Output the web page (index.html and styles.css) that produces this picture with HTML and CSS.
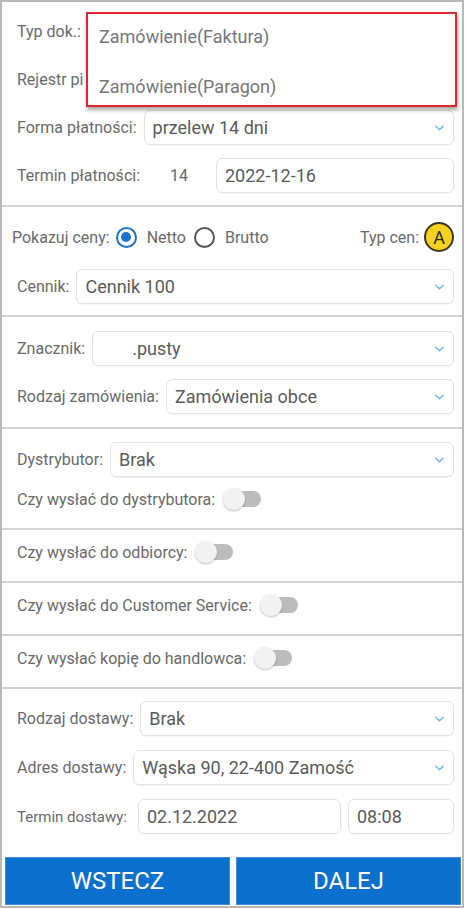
FILE: index.html
```html
<!DOCTYPE html>
<html lang="pl">
<head>
<meta charset="utf-8">
<title>Zamówienie</title>
<link rel="stylesheet" href="styles.css">
</head>
<body>
<div class="screen">
  <section class="sec sec-first">
    <div class="row">
      <span class="lbl">Typ dok.:</span>
      <div class="select"><span class="val"></span><svg class="chev" viewBox="0 0 10 6"><path d="M1 1 L5 5 L9 1"/></svg></div>
    </div>
    <div class="row">
      <span class="lbl lbl-clip">Rejestr pi</span>
      <div class="select"><span class="val"></span><svg class="chev" viewBox="0 0 10 6"><path d="M1 1 L5 5 L9 1"/></svg></div>
    </div>
    <div class="row">
      <span class="lbl">Forma płatności:</span>
      <div class="select"><span class="val">przelew 14 dni</span><svg class="chev" viewBox="0 0 10 6"><path d="M1 1 L5 5 L9 1"/></svg></div>
    </div>
    <div class="row">
      <span class="lbl">Termin płatności:</span>
      <span class="days">14</span>
      <div class="input"><span class="val">2022-12-16</span></div>
    </div>

    <div class="popup">
      <div class="popup-item">Zamówienie(Faktura)</div>
      <div class="popup-item">Zamówienie(Paragon)</div>
    </div>
  </section>

  <section class="sec sec-prices">
    <div class="row row-radio">
      <span class="lbl lbl-tight">Pokazuj ceny:</span>
      <span class="radio on"></span><span class="rlbl">Netto</span>
      <span class="radio"></span><span class="rlbl">Brutto</span>
      <span class="lbl typcen">Typ cen:</span>
      <span class="badge">A</span>
    </div>
    <div class="row">
      <span class="lbl">Cennik:</span>
      <div class="select"><span class="val">Cennik 100</span><svg class="chev" viewBox="0 0 10 6"><path d="M1 1 L5 5 L9 1"/></svg></div>
    </div>
  </section>

  <section class="sec sec-tags">
    <div class="row">
      <span class="lbl">Znacznik:</span>
      <div class="select"><span class="val val-indent">.pusty</span><svg class="chev" viewBox="0 0 10 6"><path d="M1 1 L5 5 L9 1"/></svg></div>
    </div>
    <div class="row">
      <span class="lbl">Rodzaj zamówienia:</span>
      <div class="select"><span class="val">Zamówienia obce</span><svg class="chev" viewBox="0 0 10 6"><path d="M1 1 L5 5 L9 1"/></svg></div>
    </div>
  </section>

  <section class="sec sec-dist">
    <div class="row">
      <span class="lbl">Dystrybutor:</span>
      <div class="select"><span class="val">Brak</span><svg class="chev" viewBox="0 0 10 6"><path d="M1 1 L5 5 L9 1"/></svg></div>
    </div>
    <div class="row row-toggle">
      <span class="lbl">Czy wysłać do dystrybutora:</span>
      <span class="toggle"><span class="knob"></span></span>
    </div>
  </section>

  <section class="sec sec-single">
    <div class="row row-toggle">
      <span class="lbl">Czy wysłać do odbiorcy:</span>
      <span class="toggle"><span class="knob"></span></span>
    </div>
  </section>

  <section class="sec sec-single">
    <div class="row row-toggle">
      <span class="lbl">Czy wysłać do Customer Service:</span>
      <span class="toggle"><span class="knob"></span></span>
    </div>
  </section>

  <section class="sec sec-single">
    <div class="row row-toggle">
      <span class="lbl">Czy wysłać kopię do handlowca:</span>
      <span class="toggle"><span class="knob"></span></span>
    </div>
  </section>

  <section class="sec sec-delivery">
    <div class="row">
      <span class="lbl">Rodzaj dostawy:</span>
      <div class="select"><span class="val">Brak</span><svg class="chev" viewBox="0 0 10 6"><path d="M1 1 L5 5 L9 1"/></svg></div>
    </div>
    <div class="row">
      <span class="lbl">Adres dostawy:</span>
      <div class="select"><span class="val">Wąska 90, 22-400 Zamość</span><svg class="chev" viewBox="0 0 10 6"><path d="M1 1 L5 5 L9 1"/></svg></div>
    </div>
    <div class="row">
      <span class="lbl lbl-small">Termin dostawy:</span>
      <div class="input input-date"><span class="val">02.12.2022</span></div>
      <div class="input input-time"><span class="val">08:08</span></div>
    </div>
  </section>

  <div class="buttons">
    <button class="btn">WSTECZ</button>
    <button class="btn">DALEJ</button>
  </div>
</div>
</body>
</html>
```

FILE: styles.css
```css
* { box-sizing: border-box; }

html, body {
  margin: 0;
  padding: 0;
  background: #ffffff;
}

body {
  font-family: Roboto, "Noto Sans", "Liberation Sans", sans-serif;
}

.screen {
  width: 464px;
  height: 908px;
  border: 2px solid #b9b9b9;
  background: #ffffff;
  position: relative;
  display: flex;
  flex-direction: column;
}

.sec {
  border-top: 2px solid #d3d3d3;
  padding: 13px 8px 12px 15px;
  display: flex;
  flex-direction: column;
  gap: 13px;
}

.sec-first {
  border-top: none;
  padding-top: 12px;
  position: relative;
}

.row {
  display: flex;
  align-items: center;
  height: 35px;
  gap: 7px;
}

.lbl {
  font-size: 16px;
  color: #6a6a6a;
  white-space: nowrap;
  flex: none;
}

.lbl-clip { width: 70px; overflow: hidden; }

.lbl-small { font-size: 15px; margin-right: 4px; }

.select, .input {
  flex: 1;
  height: 35px;
  border: 1px solid #e2e2e2;
  border-radius: 6px;
  display: flex;
  align-items: center;
  padding: 0 9px 0 8px;
  min-width: 0;
  box-shadow: 0 1px 1px rgba(0, 0, 0, 0.04);
}

.val {
  flex: 1;
  font-size: 18px;
  color: #5b5b5b;
  white-space: nowrap;
  overflow: hidden;
}

.val-indent { padding-left: 31px; }

.chev {
  width: 9px;
  height: 6px;
  flex: none;
}

.chev path {
  fill: none;
  stroke: #6ab6e6;
  stroke-width: 1.6;
  stroke-linecap: round;
  stroke-linejoin: round;
}

.days {
  font-size: 16px;
  color: #666;
  padding: 0 21px 0 23px;
}

.input-date { flex: 1; }
.input-time { flex: none; width: 106px; }

/* dropdown popup */
.popup {
  position: absolute;
  left: 84px;
  top: 10px;
  width: 371px;
  height: 95px;
  background: #ffffff;
  border: 2px solid #e3262c;
  box-shadow: 1px 3px 4px rgba(0, 0, 0, 0.35);
  display: flex;
  flex-direction: column;
  padding-left: 11px;
  overflow: hidden;
  z-index: 5;
}

.popup-item {
  flex: none;
  height: 50px;
  display: flex;
  align-items: center;
  font-size: 18px;
  color: #777777;
}

.popup-item:first-child { margin-top: -3px; }

/* prices */
.sec-prices {
  padding-top: 15px;
  padding-bottom: 11px;
  padding-left: 10px;
  gap: 17px;
}

.sec-prices .row:last-child { padding-left: 5px; }

.row-radio {
  height: 30px;
  gap: 0;
}

.lbl-tight { margin-right: 6px; }

.radio {
  width: 21px;
  height: 21px;
  border-radius: 50%;
  border: 2px solid #555555;
  flex: none;
  position: relative;
}

.radio.on { border-color: #1c72cf; }

.radio.on::after {
  content: "";
  position: absolute;
  left: 3.5px;
  top: 3.5px;
  width: 10px;
  height: 10px;
  border-radius: 50%;
  background: #1c72cf;
}

.rlbl {
  font-size: 16px;
  color: #6a6a6a;
  margin: 0 8px 0 10px;
}

.typcen {
  margin-left: auto;
  margin-right: 5px;
}

.badge {
  width: 30px;
  height: 30px;
  border-radius: 50%;
  background: #f6d21e;
  border: 2px solid #3a3424;
  display: flex;
  align-items: center;
  justify-content: center;
  font-size: 18px;
  color: #2a2a2a;
  flex: none;
}

.sec-tags {
  padding-top: 14px;
  padding-bottom: 13px;
}

/* toggles */
.sec-dist { gap: 10px; padding-bottom: 17px; }

.row-toggle {
  height: 24px;
  gap: 8px;
}

.toggle {
  width: 38px;
  height: 22px;
  position: relative;
  flex: none;
}

.toggle::before {
  content: "";
  position: absolute;
  left: 6px;
  right: 0;
  top: 3px;
  height: 16px;
  border-radius: 8px;
  background: #bcbcbc;
}

.knob {
  position: absolute;
  left: 0;
  top: 0;
  width: 22px;
  height: 22px;
  border-radius: 50%;
  background: #f2f2f2;
  box-shadow: 0 1px 2px rgba(0, 0, 0, 0.25);
}

.sec-single {
  padding-top: 10px;
  padding-bottom: 17px;
}

.sec-delivery {
  padding-top: 12px;
  gap: 14px;
  padding-bottom: 0;
}

/* buttons */
.buttons {
  display: flex;
  gap: 6px;
  padding: 0 1px 0 3px;
  margin-top: 23px;
}

.btn {
  flex: 1;
  height: 48px;
  background: #0b6fcd;
  border: 1px solid #3f8fdc;
  color: #ffffff;
  font-family: Roboto, "Noto Sans", "Liberation Sans", sans-serif;
  font-size: 24px;
  padding: 0;
  cursor: pointer;
}
```
